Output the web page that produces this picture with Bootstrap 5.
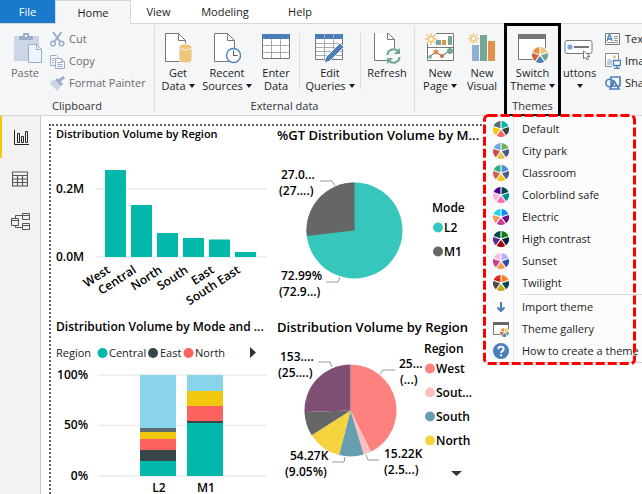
<!DOCTYPE html>
<html lang="en">
<head>
<meta charset="utf-8">
<meta name="viewport" content="width=device-width, initial-scale=1">
<title>Report themes</title>
<link href="https://cdn.jsdelivr.net/npm/bootstrap@5.3.0/dist/css/bootstrap.min.css" rel="stylesheet">
<style>
body { font-family: "Open Sans", "Noto Sans", sans-serif; font-size: 11px; line-height: 20px; color: #1c1c1c; background: #fff; overflow: hidden; min-height: 100vh; }
button { font: inherit; color: inherit; background: none; border: 0; padding: 0; }
svg { display: block; flex: none; }
.tabs { height: 23px; }
.tab { height: 23px; line-height: 24px; text-align: center; color: #1c1c1c; text-decoration: none; flex: none; }
.tab-file { width: 55px; background: #1979ca; color: #fff; }
.tab-home { width: 76px; background: #f5f6f8; border: 1px solid #d5d7da; border-bottom: 0; height: 24px; margin-bottom: -1px; position: relative; z-index: 1; }
.tab-view { width: 55px; } .tab-model { width: 78px; } .tab-help { width: 72px; }
.ribbon { background: #f5f6f8; border-top: 1px solid #d5d7da; border-bottom: 1px solid #d5d7da; height: 93px; overflow: hidden; }
.group { flex: none; padding-top: 4px; }
.group-line { width: 1px; margin: 2px 0 3px; background: #dcdee2; flex: none; }
.part-line { width: 1px; height: 56px; margin-top: 5px; background: #dcdee2; flex: none; }
.tool { flex: none; padding-top: 5px; line-height: 13px; text-align: center; white-space: nowrap; }
.tool svg { margin: 0 auto 2px; }
.tool-row { line-height: 22px; height: 22px; white-space: nowrap; }
.off { color: #6c6c6c; }
.caption-row { line-height: 20px; height: 20px; text-align: center; margin-top: auto; margin-bottom: -1px; color: #333; }
.tool-paste { width: 50px; padding-left: 6px; } .tool-sm { width: 46px; } .tool-md { width: 52px; } .tool-queries { width: 60px; } .tool-page { width: 42px; }
.tool-paste span { display: block; margin-right: 6px; }
.group-clip { width: 154px; } .group-data { width: 259px; } .group-insert { width: 89px; } .group-elements { width: 34px; margin-left: 2px; }
.group-theme { width: 57px; }
.frame-black { border: 3px solid #000; height: 94px; width: 57px; left: 504px; top: 23px; position: absolute; z-index: 2; pointer-events: none; }
.caret { display: inline-block; border: 3px solid transparent; border-top: 4px solid #1c1c1c; border-bottom: 0; margin-left: 3px; vertical-align: 2px; }
.rail { width: 41px; background: #f3f2f1; border-right: 1px solid #c8c8c8; flex: none; }
.rail button { display: flex; justify-content: center; align-items: center; height: 42px; width: 40px; }
.rail .active { border-left: 2px solid #f2c811; }
.canvas { border: 2px dotted #605e5c; border-right: 0; border-bottom: 0; margin: 8px 0 0 8px; display: grid; grid-template-columns: 221px 1fr; grid-template-rows: 190px 1fr; }
.canvas svg { overflow: visible; }
.plot text { font-weight: 600; font-size: 12px; fill: #000; }
.plot .light { font-weight: 400; font-size: 11px; fill: #222; }
.plot .head-sm { font-size: 11px; }
.plot .head-lg { font-size: 13px; }
.lead-line { fill: none; stroke: #999; stroke-width: 1; }
.theme-menu { position: absolute; left: 485px; right: 0; top: 116px; height: 247px; background: #fcfcfc; border-bottom: 1px solid #ccc; z-index: 3; }
.menu-list { padding-top: 2px; overflow: hidden; }
.theme-menu button { display: flex; align-items: center; height: 22px; padding-left: 8px; white-space: nowrap; width: 100%; gap: 13px; line-height: 22px; }
.theme-menu button svg { width: 16px; height: 16px; }
.icon-line { position: absolute; left: 28px; top: 0; bottom: 0; width: 1px; background: #e2e2e2; }
.menu-sep { height: 1px; margin: 0 0 1px 36px; background: #dcdcdc; }
.frame-red { position: absolute; left: 483px; top: 114px; z-index: 4; pointer-events: none; }
</style>
</head>
<body class="d-flex flex-column">
<svg width="0" height="0" class="position-absolute" aria-hidden="true">
<defs>
<symbol id="doc" viewBox="0 0 28 31"><path d="M1.500 .5h13l7 7v21h-20z" fill="#fff" stroke="#777"/><path d="M14.500 .5v7h7" fill="none" stroke="#777"/></symbol>
<symbol id="burst" viewBox="0 0 12 12"><g stroke="#eec77c" stroke-width="1.500"><path d="M6 0v3M6 9v3M0 6h3M9 6h3M1.500 1.500l2.200 2.200M8.300 8.300l2.200 2.200M10.500 1.500L8.300 3.700M3.700 8.300l-2.200 2.200"/></g><circle cx="6" cy="6" r="2.500" fill="#fff" stroke="#eec77c" stroke-width="1.300"/></symbol>
</defs>
</svg>
<nav class="tabs d-flex" aria-label="Ribbon tabs">
<a class="tab tab-file" href="#">File</a><a class="tab tab-home" href="#">Home</a><a class="tab tab-view" href="#">View</a><a class="tab tab-model" href="#">Modeling</a><a class="tab tab-help" href="#">Help</a>
</nav>
<div class="ribbon d-flex">
 <section class="group group-clip d-flex flex-column">
  <div class="d-flex align-items-start">
   <button class="tool tool-paste off"><svg width="29" height="31" viewBox="0 0 29 31"><path d="M0 3h25v25H0z" fill="#cdd6e7"/><path d="M5 3h4V0h6v3h4v4H5z" fill="#9badc9"/><path d="M11 2h2v2h-2z" fill="#fff"/><path d="M14.500 11.500h8l5 5v13h-13z" fill="#eef4fd" stroke="#9badc9"/><path d="M22.500 11.500v5h5" fill="none" stroke="#9badc9"/></svg><span>Paste</span></button>
   <div>
    <button class="tool-row off d-flex align-items-center gap-1"><svg width="15" height="15" viewBox="0 0 15 15"><g fill="none" stroke="#9badc9" stroke-width="1.500"><circle cx="3" cy="11.500" r="2.300"/><circle cx="11.500" cy="11.500" r="2.300"/></g><path d="M3 0l7 9.500M11.500 0l-7 9.500" stroke="#9badc9" stroke-width="2"/></svg>Cut</button>
    <button class="tool-row off d-flex align-items-center gap-1"><svg width="15" height="15" viewBox="0 0 15 15"><g fill="#f5f8fd" stroke="#9badc9"><path d="M.5 1.500h6l2 2v8h-8z"/><path d="M5.500 4.500h6l3 3v7h-9z"/><path d="M11.500 4.500v3h3M2 4.500h3M2 6.500h2M2 8.500h2M7.500 8.500h5M7.500 10.500h5M7.500 12.500h5"/></g></svg>Copy</button>
    <button class="tool-row off d-flex align-items-center gap-1"><svg width="15" height="15" viewBox="0 0 15 15"><path d="M0 5l5-1 6 6-4 5-2-3-1 1-1-3-2-1z" fill="#cdd6e7"/><path d="M5 4l2-2 6 6-2 2z" fill="#9badc9"/><path d="M9 5l5-4" stroke="#9badc9" stroke-width="3"/></svg>Format Painter</button>
   </div>
  </div>
  <div class="caption-row">Clipboard</div>
 </section>
 <i class="group-line"></i>
 <section class="group group-data d-flex flex-column">
  <div class="d-flex align-items-start">
   <button class="tool tool-sm"><svg width="28" height="31" viewBox="0 0 28 31"><use href="#doc"/><path d="M15 14c0-4 13-4 13 0v13c0 4-13 4-13 0z" fill="#edc67b" stroke="#f5f6f8"/><path d="M16 15c2 2.500 9 2.500 11 0" fill="none" stroke="#fff"/></svg>Get<br>Data<i class="caret"></i></button>
   <button class="tool tool-md"><svg width="28" height="31" viewBox="0 0 28 31"><use href="#doc"/><circle cx="20.500" cy="22.500" r="7" fill="#fff" stroke="#4e82bb" stroke-width="1.400"/><path d="M20.500 17.500v5h4" fill="none" stroke="#555"/></svg>Recent<br>Sources<i class="caret"></i></button>
   <button class="tool tool-sm"><svg width="28" height="31" viewBox="0 0 28 31"><path d="M.5 5.500h27v20H.5z" fill="#fff" stroke="#777"/><path d="M0 1h28v5H0z" fill="#4a7fba"/><path d="M9.500 6v19M18.500 6v19M1 12.500h26M1 19.500h26" stroke="#aaa"/></svg>Enter<br>Data</button>
   <i class="part-line"></i>
   <button class="tool tool-queries"><svg width="30" height="31" viewBox="0 0 30 31"><path d="M.5 5.500h27v21H.5z" fill="#fff" stroke="#777"/><path d="M0 1h28v5H0z" fill="#4a7fba"/><path d="M9.500 1v25M18.500 1v25M1 10.500h26M1 14.500h26M1 18.500h26M1 22.500h26" stroke="#aaa"/><path d="M9 30l2-6L25 10l4 4-14 14z" fill="#4a7fba" stroke="#f5f6f8"/></svg>Edit<br>Queries<i class="caret"></i></button>
   <i class="part-line"></i>
   <button class="tool tool-md"><svg width="28" height="31" viewBox="0 0 28 31"><use href="#doc" y="-1"/><circle cx="20.500" cy="23" r="8" fill="#f5f6f8"/><g fill="none" stroke="#75a695" stroke-width="2.200"><path d="M14.500 22a6 6 0 0 1 11-3M26.500 24a6 6 0 0 1-11 3"/></g><path d="M27 15v6h-6zM14 31v-6h6z" fill="#75a695"/></svg>Refresh</button>
  </div>
  <div class="caption-row">External data</div>
 </section>
 <i class="group-line"></i>
 <section class="group group-insert">
  <div class="d-flex align-items-start ps-1">
   <button class="tool tool-page"><svg width="30" height="31" viewBox="0 0 30 31"><path d="M2.500 .5h26v27h-26z" fill="#fff" stroke="#777"/><path d="M2 14.500h27" stroke="#777"/><path d="M11 7h5v5h-5zM23 3h4v9h-4z" fill="#75a695"/><path d="M17 7h4v5h-4z" fill="#e6914a"/><path d="M4 24l7-5 6 4 7-5" fill="none" stroke="#555"/><circle cx="11" cy="19" r="2.500" fill="#e08b48"/><circle cx="17" cy="23" r="2" fill="#d16b35"/><circle cx="25" cy="18" r="3" fill="#75a695"/><circle cx="5" cy="24" r="1.800" fill="#75a695"/><path d="M0 0h11v11H0z" fill="#f5f6f8"/><use href="#burst" width="12" height="12"/></svg>New<br>Page<i class="caret"></i></button>
   <button class="tool tool-page"><svg width="28" height="31" viewBox="0 0 28 31"><path d="M4 12h7v16H4z" fill="#8eaed3"/><path d="M12 2h7v26h-7z" fill="#75a695"/><path d="M20 8h7v20h-7z" fill="#e6914a"/><use href="#burst" width="11" height="11"/></svg>New<br>Visual</button>
  </div>
 </section>
 <section class="group group-theme d-flex flex-column">
  <button class="tool"><svg width="30" height="31" viewBox="0 0 30 31"><path d="M.5 1.500h27v25H.5z" fill="#fff" stroke="#777"/><path d="M0 1h28v5H0z" fill="#777"/><circle cx="22" cy="22" r="9" fill="#fff"/><g data-wheel="#edc67b,#75a695,#4a7fba,#d6603a,#e6914a" transform="translate(22 22)"></g></svg>Switch<br>Theme<i class="caret"></i></button>
  <div class="caption-row">Themes</div>
 </section>
 <section class="group group-elements">
  <button class="tool"><svg width="32" height="31" viewBox="0 0 32 31"><rect x="1" y="7.500" width="27" height="13" rx="2" fill="#fff" stroke="#777"/><circle cx="6" cy="14" r="2.600" fill="#78a7d8"/><path d="M10 14h15" stroke="#777" stroke-width="2"/><path d="M19.500 18v8l2-2 1.500 3 1.500-1-1-2.500h2.500z" fill="#fff" stroke="#777"/></svg>uttons<br><i class="caret ms-0"></i></button>
 </section>
 <section class="group ps-2">
  <button class="tool-row d-flex align-items-center gap-1"><svg width="16" height="16" viewBox="0 0 16 16"><path d="M.5 2.500h14v11H.5z" fill="#fff" stroke="#777"/><path d="M2 10l2-6h1l2 6M3 8h3" fill="none" stroke="#4a7fba" stroke-width="1.300"/><path d="M9 5.500h4M9 7.500h4M9 9.500h4M2 11.500h11" stroke="#999"/></svg>Text box</button>
  <button class="tool-row d-flex align-items-center gap-1"><svg width="16" height="16" viewBox="0 0 16 16"><path d="M.5.500h13v13H.5z" fill="#fff" stroke="#888"/><circle cx="9.500" cy="4" r="1.700" fill="#edc67b"/><path d="M2 12V8l3-3 3 4v3z" fill="#bcd"/><path d="M7 6.500h9v9H7z" fill="#f5f6f8"/><path d="M8.500 7.500h7v5h-7zM12 12.500v3M9 15.500h6" fill="#fff" stroke="#4a7fba" stroke-width="1.300"/></svg>Image</button>
  <button class="tool-row d-flex align-items-center gap-1"><svg width="16" height="16" viewBox="0 0 16 16"><g fill="none" stroke="#4a7fba" stroke-width="1.600"><circle cx="4.500" cy="8" r="3.700"/><path d="M6 2h9v9H6zM9 6l5 8H5z"/></g></svg>Shapes</button>
 </section>
</div>
<main class="d-flex flex-grow-1">
 <nav class="rail" aria-label="Views">
  <button class="active" aria-label="Report view"><svg width="15" height="15" viewBox="0 0 15 15"><path d="M.5 0v14.500H15M3.500 3.500h2v9h-2zM7.500 6.500h2v6h-2zM11.500 1.500h2v11h-2z" fill="none" stroke="#252423"/></svg></button>
  <button aria-label="Data view"><svg width="16" height="16" viewBox="0 0 16 16"><path d="M.5 1h15v14H.5zM0 4.500h16M0 8h16M0 11.500h16M5.500 4v11M10.500 4v11" fill="none" stroke="#555" stroke-width="1.200"/></svg></button>
  <button aria-label="Model view"><svg width="19" height="19" viewBox="0 0 19 19"><path d="M.5 6.500h7v7h-7zM11.500 1.500h7v6h-7zM11.500 11.500h7v6h-7zM.5 8.500h7M11.500 3.500h7M11.500 13.500h7M4.500 6V3.500h7M4.500 14v1.500h7" fill="none" stroke="#555"/></svg></button>
 </nav>
 <div class="canvas plot flex-grow-1">
  <svg width="221" height="190" viewBox="51 126 221 190" role="img" aria-label="Distribution Volume by Region">
   <text x="56" y="138" class="head-sm">Distribution Volume by Region</text>
   <path d="M95 189h172M95 257h172" stroke="#f0f0f0" stroke-width="2"/>
   <text x="56" y="193">0.2M</text><text x="56" y="261">0.0M</text>
   <path d="M105 170h21v87h-21zM131 205h21v52h-21zM157 233h21v24h-21zM183 238h21v19h-21zM209 239.500h21v17.500h-21zM235 252h21v5h-21z" fill="#01b8aa"/>
   <g text-anchor="end"><text transform="translate(111 272) rotate(-33)">West</text><text transform="translate(137 272) rotate(-33)">Central</text><text transform="translate(163 272) rotate(-33)">North</text><text transform="translate(189 272) rotate(-33)">South</text><text transform="translate(215 272) rotate(-33)">East</text><text transform="translate(241 272) rotate(-33)">South East</text></g>
  </svg>
  <svg width="217" height="190" viewBox="272 126 217 190" role="img" aria-label="%GT Distribution Volume by Mode">
   <text x="277" y="140" class="head-lg">%GT Distribution Volume by M...</text>
   <circle cx="354.500" cy="230.500" r="48" fill="#37c6bc"/><path d="M354.500 230.500V182.500A48 48 0 0 0 306.800 236z" fill="#666"/>
   <path class="lead-line" d="M320 181h12l3 5M326 282h12l2-5"/>
   <text x="281" y="179">27.0...</text><text x="279" y="195">(27....)</text><text x="281" y="280">72.99%</text><text x="279" y="296">(72.9...)</text>
   <text x="432" y="212">Mode</text><circle cx="438" cy="227.500" r="5" fill="#37c6bc"/><text x="444" y="232">L2</text><circle cx="438" cy="251.500" r="5" fill="#666"/><text x="444" y="256">M1</text>
  </svg>
  <svg width="221" height="178" viewBox="51 316 221 178" role="img" aria-label="Distribution Volume by Mode and Region">
   <text x="56" y="331">Distribution Volume by Mode and ...</text>
   <text x="56" y="357" class="light">Region</text><circle cx="102.500" cy="353" r="5" fill="#01b8aa"/><text x="109" y="357" class="light">Central</text><circle cx="153" cy="353" r="5" fill="#374649"/><text x="160" y="357" class="light">East</text><circle cx="188.500" cy="353" r="5" fill="#fd625e"/><text x="195" y="357" class="light">North</text><path d="M250 347l6 5.500-6 5.500z" fill="#333"/>
   <path d="M98 375h169M98 425.500h169M98 476h169" stroke="#ececec" stroke-width="1.500"/>
   <g text-anchor="end"><text x="88" y="379">100%</text><text x="88" y="429">50%</text><text x="88" y="480">0%</text></g>
   <path d="M140 375h36v53h-36zM187 375h36v16h-36z" fill="#8ad4eb"/><path d="M140 428h36v4h-36z" fill="#5f6b6d"/><path d="M140 432h36v7h-36zM187 391h36v15h-36z" fill="#f2c80f"/><path d="M140 439h36v11h-36zM187 406h36v15h-36z" fill="#fd625e"/><path d="M140 450h36v11h-36zM187 421h36v2h-36z" fill="#374649"/><path d="M140 461h36v15h-36zM187 423h36v53h-36z" fill="#01b8aa"/>
   <g text-anchor="middle"><text x="159" y="492">L2</text><text x="206" y="492">M1</text></g>
  </svg>
  <svg width="217" height="178" viewBox="272 316 217 178" role="img" aria-label="Distribution Volume by Region share">
   <text x="277" y="332" class="head-lg">Distribution Volume by Region</text>
   <g transform="translate(350.500 410.500)"><path d="M0 0V-46A46 46 0 0 1 20.500 41.200z" fill="#fd817e"/><path d="M0 0L20.500 41.200A46 46 0 0 1 13.300 44z" fill="#fec0bf"/><path d="M0 0L13.300 44A46 46 0 0 1-11.500 44.500z" fill="#689fb0"/><path d="M0 0L-11.500 44.500A46 46 0 0 1-38.800 24.700z" fill="#f5d33f"/><path d="M0 0L-38.800 24.700A46 46 0 0 1-46 1.500z" fill="#666"/><path d="M0 0L-46 1.500A46 46 0 0 1 0-46z" fill="#7f4f73"/></g>
   <path class="lead-line" d="M318 362h12l2 5M395 370h-12l-3 4M332 462h12l1-5M379 460h-11l-2-5"/>
   <text x="280" y="361">153....</text><text x="278" y="377">(25....)</text><text x="399" y="368">25...</text><text x="400" y="384">(...)</text><text x="290" y="460">54.27K</text><text x="285" y="476">(9.05%)</text><text x="384" y="458">15.22K</text><text x="384" y="474">(2.5...)</text>
   <text x="424" y="353">Region</text>
   <circle cx="430" cy="368.500" r="5" fill="#fd817e"/><text x="436" y="373">West</text><circle cx="430" cy="392.500" r="5" fill="#fec0bf"/><text x="436" y="397">Sout...</text><circle cx="430" cy="416.500" r="5" fill="#689fb0"/><text x="436" y="421">South</text><circle cx="430" cy="440.500" r="5" fill="#f5d33f"/><text x="436" y="445">North</text><path d="M451 471h11l-5.500 5z" fill="#333"/>
  </svg>
 </div>
</main>
<div class="frame-black"></div>
<div class="theme-menu">
 <i class="icon-line"></i>
 <div class="menu-list" role="menu">
  <button role="menuitem"><svg viewBox="-8 -8 16 16"><g data-wheel="#01b8aa,#374649,#fd625e,#f2c80f,#5f6b6d"></g></svg>Default</button>
  <button role="menuitem"><svg viewBox="-8 -8 16 16"><g data-wheel="#6fb061,#485a8c,#e8c24a,#c94f4c,#73a9df"></g></svg>City park</button>
  <button role="menuitem"><svg viewBox="-8 -8 16 16"><g data-wheel="#4a8ddc,#4c5d8a,#f3c911,#dc5b57,#33ae81"></g></svg>Classroom</button>
  <button role="menuitem"><svg viewBox="-8 -8 16 16"><g data-wheel="#074650,#009292,#fe6db6,#feb5da,#480091"></g></svg>Colorblind safe</button>
  <button role="menuitem"><svg viewBox="-8 -8 16 16"><g data-wheel="#118dff,#750985,#c83d95,#ff985e,#1dd5ee"></g></svg>Electric</button>
  <button role="menuitem"><svg viewBox="-8 -8 16 16"><g data-wheel="#107c10,#002050,#a80000,#5c2d91,#004b50"></g></svg>High contrast</button>
  <button role="menuitem"><svg viewBox="-8 -8 16 16"><g data-wheel="#b6b0ff,#3049ad,#ff994e,#c83d95,#ffbbed"></g></svg>Sunset</button>
  <button role="menuitem"><svg viewBox="-8 -8 16 16"><g data-wheel="#ff7f2a,#004753,#ccaa14,#4b4c4e,#d82c20"></g></svg>Twilight</button>
  <div class="menu-sep"></div>
  <button role="menuitem"><svg viewBox="0 0 16 16"><path d="M8 3v9M4.500 8.500L8 12l3.500-3.500" fill="none" stroke="#4a7fba" stroke-width="2"/></svg>Import theme</button>
  <button role="menuitem"><svg viewBox="0 0 16 16"><path d="M.5 1.500h15v12H.5z" fill="#fff" stroke="#777"/><path d="M0 1h16v3H0z" fill="#666"/><circle cx="11.500" cy="11.500" r="5" fill="#fff"/><g data-wheel="#edc67b,#75a695,#4a7fba,#d6603a,#e6914a" transform="translate(11.500 11.500) scale(.55)"></g></svg>Theme gallery</button>
  <button role="menuitem"><svg viewBox="0 0 16 16"><circle cx="8" cy="8" r="8" fill="#4a7fba"/><path d="M5.300 6.200c0-3.500 5.400-3.300 5.400-.2 0 2-2.600 2-2.600 4M8.100 11.200v2" fill="none" stroke="#fff" stroke-width="1.800"/></svg>How to create a theme</button>
 </div>
</div>
<svg class="frame-red" width="153" height="251"><rect x="1.500" y="1.500" width="150" height="248" rx="4" fill="none" stroke="#f00" stroke-width="3" stroke-dasharray="9 3"/></svg>
<script>
// Five-wedge colour wheels for the theme icons
document.querySelectorAll('[data-wheel]').forEach(function (g) {
  g.dataset.wheel.split(',').forEach(function (c, i) {
    var a = (i * 72 + 4) * Math.PI / 180, b = (i * 72 + 68) * Math.PI / 180, m = (a + b) / 2;
    var p = document.createElementNS('http://www.w3.org/2000/svg', 'path');
    p.setAttribute('d', 'M' + Math.sin(m) + ' ' + -Math.cos(m) + 'L' + 8 * Math.sin(a) + ' ' + -8 * Math.cos(a) + 'A8 8 0 0 1 ' + 8 * Math.sin(b) + ' ' + -8 * Math.cos(b) + 'z');
    p.setAttribute('fill', c);
    g.appendChild(p);
  });
});
</script>
<script src="https://cdn.jsdelivr.net/npm/bootstrap@5.3.0/dist/js/bootstrap.bundle.min.js"></script>
</body>
</html>
